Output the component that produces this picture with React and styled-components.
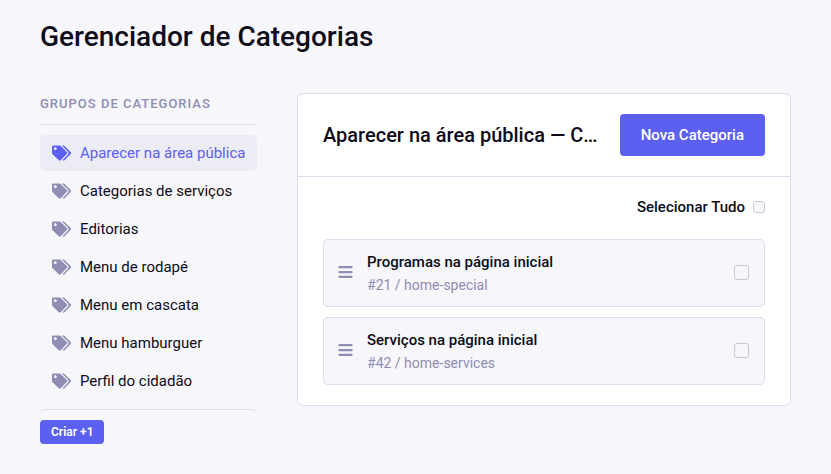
import React from "react";
import styled, { createGlobalStyle } from "styled-components";

const GlobalStyle = createGlobalStyle`
  *, *::before, *::after { box-sizing: border-box; }
  body {
    margin: 0;
    background: #f6f6fb;
    color: #0d0c18;
    font-family: Roboto, "Liberation Sans", sans-serif;
    font-size: 15px;
    line-height: 20px;
  }
  button, input { font: inherit; }
`;

const Page = styled.div`
  padding: 16px 40px 30px;
`;

const PageTitle = styled.h1`
  margin: 0 0 35px;
  font-size: 28px;
  font-weight: 500;
  line-height: 42px;
`;

const Columns = styled.div`
  display: grid;
  grid-template-columns: 217px minmax(0, 1fr);
  align-items: start;
  gap: 40px;
`;

const GroupsTitle = styled.h2`
  margin: 0;
  padding-bottom: 10px;
  border-bottom: 1px solid #dddcec;
  color: #8e8db3;
  font-size: 13px;
  font-weight: 500;
  line-height: 21px;
  letter-spacing: 1px;
  text-transform: uppercase;
`;

const GroupList = styled.ul`
  display: flex;
  flex-direction: column;
  gap: 2px;
  margin: 10px 0;
  padding: 0;
  list-style: none;
`;

const GroupLink = styled.a`
  display: flex;
  align-items: center;
  gap: 9px;
  height: 36px;
  padding: 0 12px 0 12px;
  border-radius: 5px;
  background: ${({ $active }) => ($active ? "#ececf5" : "transparent")};
  color: ${({ $active }) => ($active ? "#5b60f0" : "#0d0c18")};
  text-decoration: none;
  white-space: nowrap;

  svg {
    flex: none;
    color: ${({ $active }) => ($active ? "#5b60f0" : "#8e8db3")};
  }
`;

const GroupsFooter = styled.div`
  padding-top: 10px;
  border-top: 1px solid #dddcec;
  border-radius: 5px;
`;

const Button = styled.button`
  flex: none;
  display: block;
  height: ${({ $small }) => ($small ? "24px" : "42px")};
  padding: ${({ $small }) => ($small ? "0 11px" : "0 21px")};
  border: 0;
  border-radius: 4px;
  background: #5b60f0;
  color: #fff;
  font-size: ${({ $small }) => ($small ? "12px" : "15px")};
  font-weight: ${({ $small }) => ($small ? 600 : 500)};
  cursor: pointer;
`;

const Panel = styled.section`
  border: 1px solid #dddcf0;
  border-radius: 6px;
  background: #fff;
`;

const PanelHeader = styled.header`
  display: flex;
  align-items: center;
  justify-content: space-between;
  gap: 16px;
  padding: 20px 25px;
  border-bottom: 1px solid #dddcf0;
`;

const PanelTitle = styled.h2`
  min-width: 0;
  margin: 0;
  overflow: hidden;
  font-size: 20px;
  font-weight: 500;
  line-height: 28px;
  text-overflow: ellipsis;
  white-space: nowrap;
`;

const PanelBody = styled.div`
  padding: 20px 25px;
`;

const SelectAll = styled.label`
  display: flex;
  align-items: center;
  justify-content: flex-end;
  gap: 8px;
  margin-bottom: 22px;
  font-weight: 500;
`;

const Checkbox = styled.input.attrs({ type: "checkbox" })`
  appearance: none;
  flex: none;
  width: ${({ $size }) => $size}px;
  height: ${({ $size }) => $size}px;
  margin: 0;
  border: 1px solid #c8c6d8;
  border-radius: 3px;
  background: #f6f6fb;

  &:checked {
    border-color: #5b60f0;
    background: #5b60f0;
  }
`;

const CategoryList = styled.ul`
  display: grid;
  gap: 10px;
  margin: 0;
  padding: 0;
  list-style: none;
`;

const CategoryRow = styled.li`
  display: flex;
  align-items: center;
  gap: 14px;
  height: 68px;
  padding: 0 15px 2px 14px;
  border: 1px solid #dddcf0;
  border-radius: 5px;
  background: #f6f6fb;

  > svg {
    flex: none;
    color: #8e8db3;
  }
`;

const CategoryText = styled.label`
  flex: 1;
  min-width: 0;
  padding-top: 2px;
`;

const CategoryName = styled.span`
  display: block;
  font-weight: 500;
  line-height: 24px;
`;

const CategoryMeta = styled.span`
  display: block;
  color: #8e8db3;
  font-size: 14px;
  line-height: 22px;
`;

function TagsIcon() {
  return (
    <svg width="19" height="16" viewBox="0 0 640 512" fill="currentColor" aria-hidden="true">
      <path d="M497.941 225.941L286.059 14.059A48 48 0 0 0 252.118 0H48C21.49 0 0 21.49 0 48v204.118a48 48 0 0 0 14.059 33.941l211.882 211.882c18.744 18.745 49.136 18.746 67.882 0l204.118-204.118c18.745-18.745 18.745-49.137 0-67.882zM112 160c-26.51 0-48-21.49-48-48s21.49-48 48-48 48 21.49 48 48-21.49 48-48 48zm513.941 133.823L421.823 497.941c-18.745 18.745-49.137 18.745-67.882 0l-.36-.36L527.64 323.522c16.999-16.999 26.36-39.6 26.36-63.64s-9.362-46.641-26.36-63.64L331.397 0h48.721a48 48 0 0 1 33.941 14.059l211.882 211.882c18.745 18.745 18.745 49.137 0 67.882z" />
    </svg>
  );
}

function HandleIcon() {
  return (
    <svg width="15" height="12" viewBox="0 0 15 12" fill="currentColor" aria-hidden="true">
      <path d="M1.5 0h12a.9.9 0 0 1 0 2.3h-12a.9.9 0 0 1 0-2.3zM1.5 5h12a.9.9 0 0 1 0 2.3h-12a.9.9 0 0 1 0-2.3zM1.5 9.7h12a.9.9 0 0 1 0 2.3h-12a.9.9 0 0 1 0-2.3z" />
    </svg>
  );
}

const groups = [
  "Aparecer na área pública",
  "Categorias de serviços",
  "Editorias",
  "Menu de rodapé",
  "Menu em cascata",
  "Menu hamburguer",
  "Perfil do cidadão",
];

const categories = [
  { id: 21, name: "Programas na página inicial", slug: "home-special" },
  { id: 42, name: "Serviços na página inicial", slug: "home-services" },
];

export default function App() {
  return (
    <>
      <GlobalStyle />
      <Page>
        <PageTitle>Gerenciador de Categorias</PageTitle>
        <Columns>
          <nav aria-labelledby="groups-title">
            <GroupsTitle id="groups-title">Grupos de categorias</GroupsTitle>
            <GroupList>
              {groups.map((name, index) => (
                <li key={name}>
                  <GroupLink href="#" $active={index === 0} aria-current={index === 0 ? "page" : undefined}>
                    <TagsIcon />
                    {name}
                  </GroupLink>
                </li>
              ))}
            </GroupList>
            <GroupsFooter>
              <Button type="button" $small>Criar +1</Button>
            </GroupsFooter>
          </nav>
          <Panel>
            <PanelHeader>
              <PanelTitle>Aparecer na área pública — C…</PanelTitle>
              <Button type="button">Nova Categoria</Button>
            </PanelHeader>
            <PanelBody>
              <SelectAll>
                Selecionar Tudo
                <Checkbox $size={12} />
              </SelectAll>
              <CategoryList>
                {categories.map(({ id, name, slug }) => (
                  <CategoryRow key={id}>
                    <HandleIcon />
                    <CategoryText htmlFor={`category-${id}`}>
                      <CategoryName>{name}</CategoryName>
                      <CategoryMeta>#{id} / {slug}</CategoryMeta>
                    </CategoryText>
                    <Checkbox id={`category-${id}`} $size={15} />
                  </CategoryRow>
                ))}
              </CategoryList>
            </PanelBody>
          </Panel>
        </Columns>
      </Page>
    </>
  );
}
